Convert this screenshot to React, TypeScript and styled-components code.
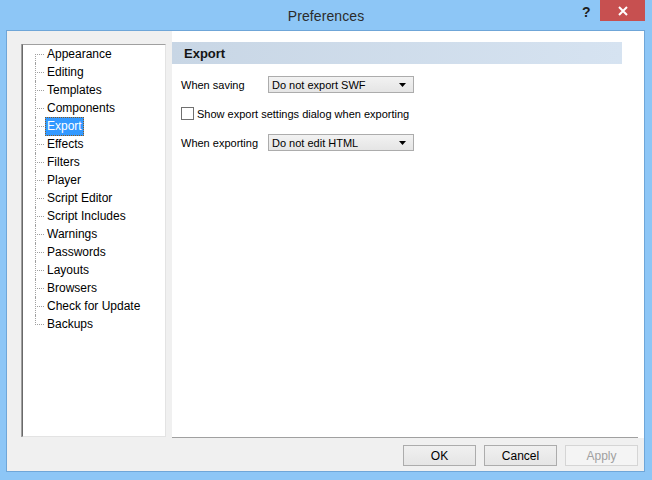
import React from "react";
import styled, { createGlobalStyle } from "styled-components";

const Global = createGlobalStyle`
  html, body { margin: 0; padding: 0; width: 652px; height: 480px; overflow: hidden; }
  body { font-family: "Liberation Sans", Arial, sans-serif; font-size: 11px; color: #000; }
  * { box-sizing: border-box; }
`;

const Frame = styled.div`
  position: relative;
  width: 652px;
  height: 480px;
  background: #8dc6f6;
  padding: 30px 7px 8px 6px;
  display: flex;
  flex-direction: column;
`;

const TitleBar = styled.div`
  position: absolute;
  left: 0;
  top: 0;
  right: 0;
  height: 30px;
  display: flex;
  align-items: center;
  justify-content: center;
  padding-top: 1px;
`;

const Title = styled.span`
  font-size: 14px;
  color: #2b2b2b;
  letter-spacing: 0.1px;
`;

const HelpGlyph = styled.span`
  position: absolute;
  left: 582px;
  top: 4px;
  font-size: 14px;
  font-weight: bold;
  color: #1e1e1e;
`;

const CloseButton = styled.div`
  position: absolute;
  right: 7px;
  top: 0;
  width: 45px;
  height: 21px;
  background: #c75050;
  display: flex;
  align-items: center;
  justify-content: center;
`;

const Client = styled.div`
  flex: 1;
  display: flex;
  flex-direction: column;
  background: #f0f0f0;
  border: 1px solid #6fa6d8;
`;

const MainRow = styled.div`
  display: flex;
  height: 407px;
`;

const LeftPane = styled.div`
  width: 165px;
  padding: 13px 6px 1px 15px;
  display: flex;
`;

const TreeBox = styled.div`
  flex: 1;
  background: #fff;
  border-style: solid;
  border-width: 1px;
  border-color: #a0a0a0 #e3e3e3 #e3e3e3 #696969;
  box-shadow: -1px 0 0 #a0a0a0;
`;

const TreeRow = styled.div<{ $pos: "first" | "mid" | "last" }>`
  position: relative;
  height: 18px;
  display: flex;
  align-items: center;
  padding-left: 22px;
  font-size: 12px;
  &::before {
    content: "";
    position: absolute;
    left: 12px;
    top: 9px;
    width: 9px;
    border-top: 1px dotted #a0a0a0;
  }
  &::after {
    content: "";
    position: absolute;
    left: 12px;
    top: ${(p) => (p.$pos === "first" ? "9px" : "0")};
    height: ${(p) => (p.$pos === "mid" ? "18px" : p.$pos === "first" ? "9px" : "10px")};
    border-left: 1px dotted #a0a0a0;
  }
`;

const TreeLabel = styled.span<{ $selected?: boolean }>`
  padding: 1px 1px 1px 1px;
  line-height: 15px;
  border: 1px dotted ${(p) => (p.$selected ? "#8a5a20" : "transparent")};
  background: ${(p) => (p.$selected ? "#3399ff" : "transparent")};
  color: ${(p) => (p.$selected ? "#fff" : "#000")};
`;

const RightPane = styled.div`
  flex: 1;
  background: #fff;
  display: flex;
`;

const PanelBody = styled.div`
  flex: 1;
  margin-right: 6px;
  border-bottom: 1px solid #a0a0a0;
  display: flex;
  flex-direction: column;
`;

const SectionHeader = styled.div`
  margin: 11px 16px 0 0;
  height: 22px;
  display: flex;
  align-items: center;
  padding-left: 12px;
  background: linear-gradient(to right, #c8d6e5, #d6e3f1);
  font-size: 13px;
  font-weight: bold;
  color: #151515;
`;

const Form = styled.div`
  padding: 12px 0 0 9px;
  display: flex;
  flex-direction: column;
`;

const FieldRow = styled.div<{ $gap?: number }>`
  display: flex;
  align-items: center;
  margin-top: ${(p) => p.$gap ?? 0}px;
`;

const FieldLabel = styled.span`
  width: 87px;
  font-size: 11px;
  color: #000;
`;

const Combo = styled.div`
  width: 146px;
  height: 17px;
  border: 1px solid #acacac;
  background: linear-gradient(#f2f2f2, #e5e5e5);
  display: flex;
  align-items: center;
  justify-content: space-between;
  padding: 0 7px 0 3px;
  font-size: 11px;
`;

const CheckBox = styled.span`
  width: 13px;
  height: 13px;
  border: 1px solid #707070;
  background: #fff;
  margin-right: 3px;
`;

const CheckText = styled.span`
  font-size: 11px;
`;

const ButtonBar = styled.div`
  flex: 1;
  display: flex;
  justify-content: flex-end;
  gap: 8px;
  padding: 7px 6px 0 0;
`;

const Button = styled.div<{ $disabled?: boolean }>`
  width: 73px;
  height: 21px;
  display: flex;
  align-items: center;
  justify-content: center;
  font-size: 12px;
  border: 1px solid ${(p) => (p.$disabled ? "#d5d5d5" : "#acacac")};
  background: ${(p) => (p.$disabled ? "#f4f4f4" : "linear-gradient(#f0f0f0, #e5e5e5)")};
  color: ${(p) => (p.$disabled ? "#a0a0a0" : "#000")};
`;

const Arrow = () => (
  <svg width="7" height="4" viewBox="0 0 7 4">
    <polygon points="0,0 7,0 3.5,4" fill="#000" />
  </svg>
);

const items = [
  "Appearance",
  "Editing",
  "Templates",
  "Components",
  "Export",
  "Effects",
  "Filters",
  "Player",
  "Script Editor",
  "Script Includes",
  "Warnings",
  "Passwords",
  "Layouts",
  "Browsers",
  "Check for Update",
  "Backups",
];

export default function App() {
  return (
    <>
      <Global />
      <Frame>
        <TitleBar>
          <Title>Preferences</Title>
          <HelpGlyph>?</HelpGlyph>
          <CloseButton>
            <svg width="10" height="10" viewBox="0 0 10 10">
              <path d="M1 1 L9 9 M9 1 L1 9" stroke="#fff" strokeWidth="2" />
            </svg>
          </CloseButton>
        </TitleBar>
        <Client>
          <MainRow>
            <LeftPane>
              <TreeBox>
                {items.map((it, i) => (
                  <TreeRow
                    key={it}
                    $pos={i === 0 ? "first" : i === items.length - 1 ? "last" : "mid"}
                  >
                    <TreeLabel $selected={it === "Export"}>{it}</TreeLabel>
                  </TreeRow>
                ))}
              </TreeBox>
            </LeftPane>
            <RightPane>
              <PanelBody>
                <SectionHeader>Export</SectionHeader>
                <Form>
                  <FieldRow>
                    <FieldLabel>When saving</FieldLabel>
                    <Combo>
                      <span>Do not export SWF</span>
                      <Arrow />
                    </Combo>
                  </FieldRow>
                  <FieldRow $gap={14}>
                    <CheckBox />
                    <CheckText>Show export settings dialog when exporting</CheckText>
                  </FieldRow>
                  <FieldRow $gap={14}>
                    <FieldLabel>When exporting</FieldLabel>
                    <Combo>
                      <span>Do not edit HTML</span>
                      <Arrow />
                    </Combo>
                  </FieldRow>
                </Form>
              </PanelBody>
            </RightPane>
          </MainRow>
          <ButtonBar>
            <Button>OK</Button>
            <Button>Cancel</Button>
            <Button $disabled>Apply</Button>
          </ButtonBar>
        </Client>
      </Frame>
    </>
  );
}
